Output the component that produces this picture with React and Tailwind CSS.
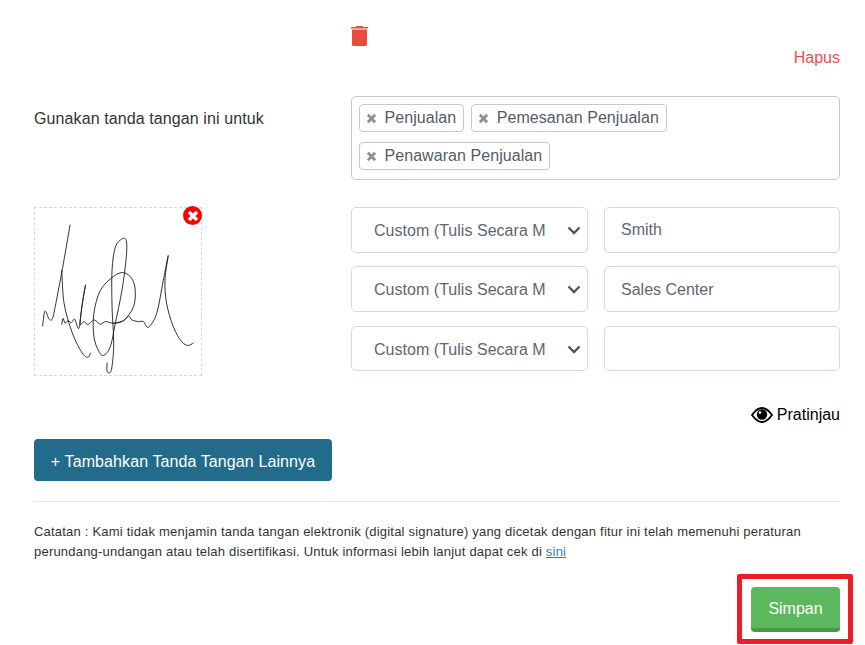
import React from "react";

function smooth(p) {
  let d = `M${p[0][0]} ${p[0][1]}`;
  for (let i = 0; i < p.length - 1; i++) {
    const a = p[Math.max(i - 1, 0)], b = p[i], c = p[i + 1], e = p[Math.min(i + 2, p.length - 1)];
    d += `C${b[0] + (c[0] - a[0]) / 6} ${b[1] + (c[1] - a[1]) / 6} ${c[0] - (e[0] - b[0]) / 6} ${c[1] - (e[1] - b[1]) / 6} ${c[0]} ${c[1]}`;
  }
  return d;
}

const strokes = [
  [[125,408],[130,370],[135,365],[145,388],[155,385],[165,340],[185,235],[208,103]],
  [[183,240],[190,340],[215,430],[245,490],[262,503],[270,490]],
  [[183,403],[187,385],[193,400],[202,392],[212,398],[222,388],[235,415],[245,340],[255,285],[250,310],[238,400],[250,395],[262,404],[272,396],[282,390],[300,403],[315,395],[340,400],[370,392],[385,378],[395,390],[415,395],[430,395],[445,412],[470,370],[490,270],[505,195],[495,270],[500,340],[520,410],[545,455],[565,467],[580,460]],
  [[340,400],[370,392],[400,350],[405,300],[395,265],[370,247],[340,258],[300,300],[280,370],[280,440],[295,485],[310,497],[330,470],[345,400],[365,300],[378,200],[378,150],[365,145],[345,170],[335,240],[335,350],[340,460],[335,530],[328,550],[320,545],[320,520]],
];

function Cross({ className, width = 3 }) {
  return (
    <svg viewBox="0 0 12 12" className={className} fill="none" stroke="currentColor" strokeWidth={width}>
      <path d="M2 2L10 10M10 2L2 10" />
    </svg>
  );
}

function Tag({ children }) {
  return (
    <span className="flex h-[28px] items-center gap-[7.5px] rounded-[4px] border border-[#c8c8c8] pl-[6px] pr-[7px] text-[16px] tracking-[0.06px] text-[#555b66]">
      <Cross className="h-[11px] w-[11px] text-[#8f8f8f]" />
      {children}
    </span>
  );
}

function Row({ value, height, inputClass = "", selectClass = "pt-[1px]" }) {
  return (
    <div className={`grid grid-cols-[237px_236px] gap-[16px] ${height}`}>
      <div className={`flex items-center justify-between rounded-[5px] border border-[#d1dadc] pl-[22px] pr-[6px] text-[16px] tracking-[0.03px] text-[#5f6670] ${selectClass}`}>
        <span className="block w-[172px] overflow-hidden whitespace-nowrap">Custom (Tulis Secara M</span>
        <svg viewBox="0 0 14 9" className="h-[9px] w-[14px] text-[#555555]" fill="none" stroke="currentColor" strokeWidth="2.4">
          <path d="M1.5 1.5L7 7L12.5 1.5" />
        </svg>
      </div>
      <div className={`flex items-center rounded-[5px] border border-[#d1dadc] px-[16px] text-[16px] text-[#5f6670] ${inputClass}`}>{value}</div>
    </div>
  );
}

export default function App() {
  return (
    <div className="relative h-[645px] w-[865px] overflow-hidden bg-white pl-[34px] pr-[25px] pt-[26px] font-['Liberation_Sans',Arial,sans-serif]">
      <div className="pl-[317px]">
        <svg viewBox="0 0 17 20" className="h-[20px] w-[17px] text-[#e74c3c]" fill="currentColor">
          <path d="M5 0.5Q5 0 5.5 0H11.5Q12 0 12 0.5V1H16.5Q17 1 17 1.5V2.5H0V1.5Q0 1 0.5 1H5Z" />
          <path d="M1 3.5H16V18.5Q16 20 14.5 20H2.5Q1 20 1 18.5Z" />
        </svg>
      </div>
      <div className="mt-[3px] text-right text-[16px] leading-[18px] text-[#ea4f4f]">Hapus</div>

      <div className="mt-[29px] grid grid-cols-[317px_1fr]">
        <div className="pt-[14px] text-[16px] leading-[18px] tracking-[0.1px] text-[#333333]">Gunakan tanda tangan ini untuk</div>
        <div className="flex h-[84px] flex-wrap content-start gap-x-[7px] gap-y-[10px] rounded-[5px] border border-[#c8c8c8] px-[7px] pt-[7px]">
          <Tag>Penjualan</Tag>
          <Tag>Pemesanan Penjualan</Tag>
          <Tag>Penawaran Penjualan</Tag>
        </div>
      </div>

      <div className="mt-[27px] grid grid-cols-[317px_1fr]">
        <div className="relative h-[169px] w-[168px] border border-dashed border-[#d8d8d8]">
          <svg viewBox="102 52 502 504" className="h-full w-full" fill="none" stroke="#222222" strokeWidth="2.8" strokeLinecap="round" strokeLinejoin="round">
            {strokes.map((s, i) => (
              <path key={i} d={smooth(s)} />
            ))}
          </svg>
          <span className="absolute right-[-1px] top-[-2px] flex h-[19px] w-[19px] items-center justify-center rounded-full bg-[#ff0000]">
            <Cross className="h-[12px] w-[12px] text-white" width={3.4} />
          </span>
        </div>
        <div className="flex flex-col">
          <Row value="Smith" height="h-[46px]" inputClass="pb-[1px]" />
          <div className="h-[13px]" />
          <Row value="Sales Center" height="h-[46px]" inputClass="pt-[1px]" />
          <div className="h-[14px]" />
          <Row value="" height="h-[45px]" selectClass="pt-[2px]" />
        </div>
      </div>

      <div className="mt-[30px] flex items-center justify-end gap-[4px] text-[16px] leading-[18px] text-black">
        <svg viewBox="0 0 22 16" className="h-[16px] w-[22px]">
          <path d="M1 8Q6 1 11 1T21 8Q16 15 11 15T1 8Z" fill="white" stroke="black" strokeWidth="1.8" />
          <circle cx="11" cy="7.5" r="5.2" fill="black" />
          <circle cx="9" cy="5.5" r="1.3" fill="white" />
        </svg>
        Pratinjau
      </div>

      <button className="mt-[15px] flex h-[42px] w-[298px] items-center justify-center rounded-[4px] bg-[#236b8a] pt-[3px] text-[16px] tracking-[0.1px] text-white">
        + Tambahkan Tanda Tangan Lainnya
      </button>

      <hr className="mt-[20px] border-t border-[#e3e6e6]" />

      <p className="mt-[20px] text-[13px] leading-[20px] tracking-[0.21px] text-[#333333]">
        Catatan : Kami tidak menjamin tanda tangan elektronik (digital signature) yang dicetak dengan fitur ini telah memenuhi peraturan perundang-undangan atau telah disertifikasi. Untuk informasi lebih lanjut dapat cek di <a className="text-[#2a86b0] underline">sini</a>
      </p>

      <div className="mt-[25px] flex justify-end">
        <button className="h-[45px] w-[89px] rounded-[4px] border-b-[4px] border-[#469a46] bg-[#5cb85c] pt-[2px] text-[16px] text-white">Simpan</button>
      </div>

      <div className="absolute left-[737px] top-[574px] h-[70px] w-[116px] rounded-[2px] border-[5px] border-[#ee1c25]" />
    </div>
  );
}
